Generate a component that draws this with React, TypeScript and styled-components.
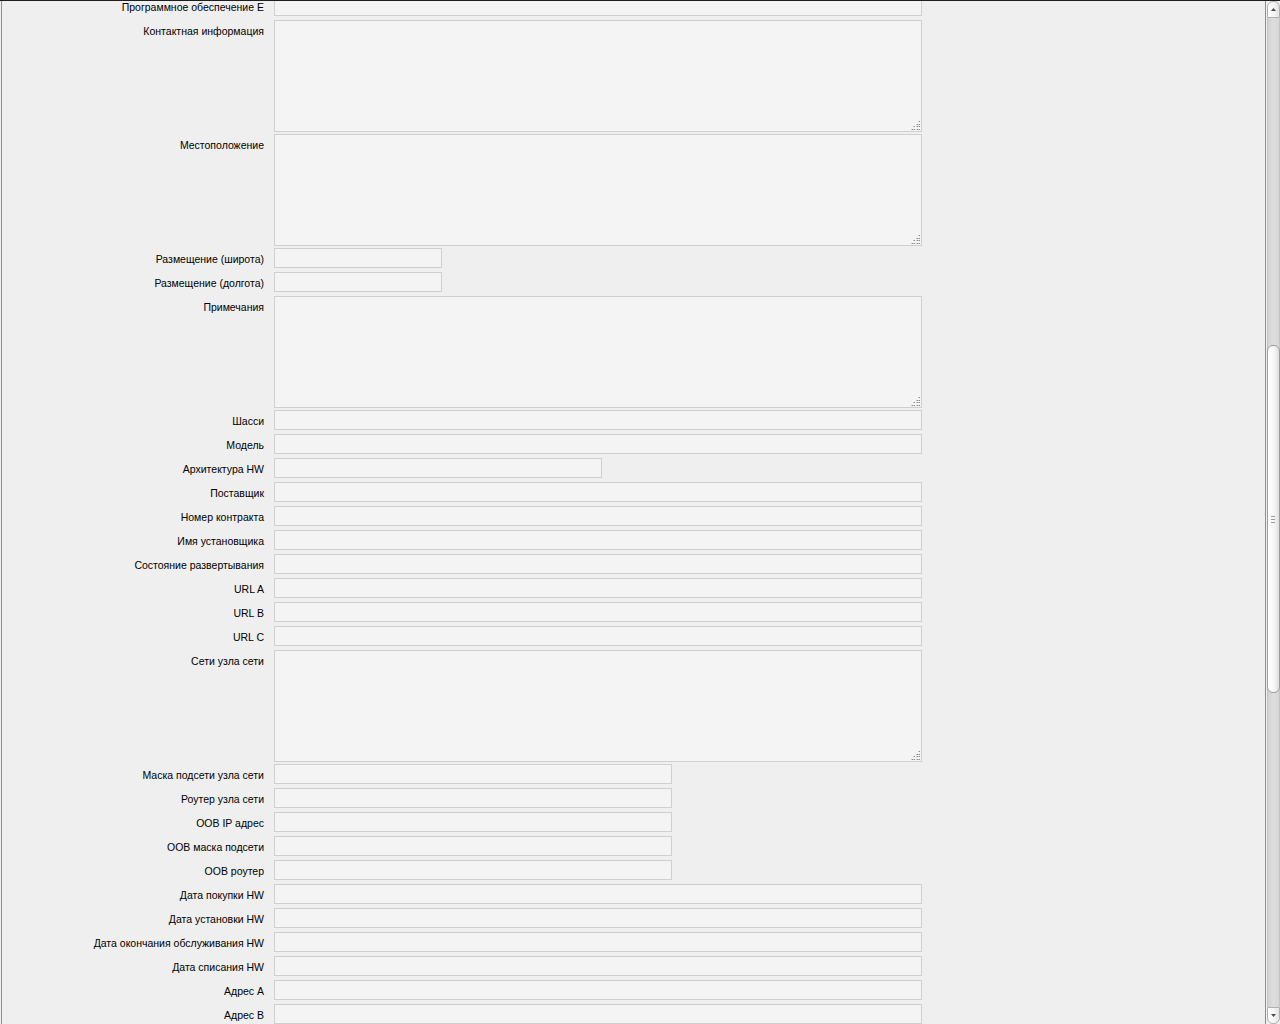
import React from "react";
import styled, { createGlobalStyle } from "styled-components";

const Global = createGlobalStyle`
  html, body {
    margin: 0;
    padding: 0;
    height: 100%;
    overflow: hidden;
    background: #efefef;
  }
  #root {
    height: 100%;
  }
`;

type Field =
  | { label: string; kind: "input"; width: number }
  | { label: string; kind: "area" };

const FULL = 648;
const SHORT = 168;
const MID = 328;
const NET = 398;

const fields: Field[] = [
  { label: "Программное обеспечение E", kind: "input", width: FULL },
  { label: "Контактная информация", kind: "area" },
  { label: "Местоположение", kind: "area" },
  { label: "Размещение (широта)", kind: "input", width: SHORT },
  { label: "Размещение (долгота)", kind: "input", width: SHORT },
  { label: "Примечания", kind: "area" },
  { label: "Шасси", kind: "input", width: FULL },
  { label: "Модель", kind: "input", width: FULL },
  { label: "Архитектура HW", kind: "input", width: MID },
  { label: "Поставщик", kind: "input", width: FULL },
  { label: "Номер контракта", kind: "input", width: FULL },
  { label: "Имя установщика", kind: "input", width: FULL },
  { label: "Состояние развертывания", kind: "input", width: FULL },
  { label: "URL A", kind: "input", width: FULL },
  { label: "URL B", kind: "input", width: FULL },
  { label: "URL C", kind: "input", width: FULL },
  { label: "Сети узла сети", kind: "area" },
  { label: "Маска подсети узла сети", kind: "input", width: NET },
  { label: "Роутер узла сети", kind: "input", width: NET },
  { label: "OOB IP адрес", kind: "input", width: NET },
  { label: "OOB маска подсети", kind: "input", width: NET },
  { label: "OOB роутер", kind: "input", width: NET },
  { label: "Дата покупки HW", kind: "input", width: FULL },
  { label: "Дата установки HW", kind: "input", width: FULL },
  { label: "Дата окончания обслуживания HW", kind: "input", width: FULL },
  { label: "Дата списания HW", kind: "input", width: FULL },
  { label: "Адрес A", kind: "input", width: FULL },
  { label: "Адрес B", kind: "input", width: FULL },
];

/* window layout: page area + vertical scrollbar */
const Window = styled.div`
  display: flex;
  height: 100%;
  border-top: 1px solid #1e1e1e;
  box-sizing: border-box;
`;

const Page = styled.main`
  flex: 1;
  margin-left: 1px;
  border-left: 1px solid #8191a7;
  border-right: 1px solid #8191a7;
  overflow: hidden;
  font-family: "Liberation Sans", Arial, sans-serif;
  font-size: 10.5px;
  color: #000;
`;

const Form = styled.form`
  display: flex;
  flex-direction: column;
  margin-top: -5px;
`;

const Row = styled.div<{ $tall?: boolean }>`
  display: grid;
  grid-template-columns: 262px 1fr;
  column-gap: 10px;
  align-items: start;
  height: ${(p) => (p.$tall ? 114 : 24)}px;
`;

const Label = styled.label`
  text-align: right;
  line-height: 13px;
  padding-top: 5px;
  white-space: nowrap;
`;

const TextInput = styled.input<{ $w: number }>`
  display: block;
  box-sizing: border-box;
  width: ${(p) => p.$w}px;
  height: 20px;
  margin: 0;
  padding: 0 3px;
  border: 1px solid #cfcfcf;
  background: #f4f4f4;
  font: inherit;
  outline: none;
`;

const AreaWrap = styled.div`
  position: relative;
  width: ${FULL}px;
  height: 112px;
`;

const TextArea = styled.textarea`
  display: block;
  box-sizing: border-box;
  width: 100%;
  height: 100%;
  margin: 0;
  padding: 2px 3px;
  border: 1px solid #cfcfcf;
  background: #f4f4f4;
  font: inherit;
  resize: none;
  outline: none;
`;

const Grip = styled.svg`
  position: absolute;
  right: 2px;
  bottom: 2px;
  width: 9px;
  height: 9px;
  pointer-events: none;
`;

const gripDots: [number, number][] = [
  [8, 0],
  [6, 3],
  [8, 3],
  [3, 5],
  [6, 5],
  [8, 5],
  [1, 8],
  [3, 8],
  [6, 8],
  [8, 8],
];

function ResizeGrip() {
  return (
    <Grip viewBox="0 0 9 9">
      {gripDots.map(([x, y], i) => (
        <g key={i}>
          <rect x={x} y={y} width={1} height={1} fill="#8c8c8c" />
          <rect x={x - 1} y={y} width={1} height={1} fill="#c4c4c4" />
        </g>
      ))}
    </Grip>
  );
}

/* scrollbar */
const ScrollColumn = styled.div`
  width: 14px;
  padding-left: 1px;
  box-sizing: border-box;
  display: flex;
  flex-direction: column;
`;

const Bar = styled.div`
  width: 13px;
  height: 100%;
  display: flex;
  flex-direction: column;
`;

const Stepper = styled.div<{ $down?: boolean }>`
  height: 17px;
  flex: none;
  box-sizing: border-box;
  border: 1px solid #b0b0b0;
  border-radius: ${(p) => (p.$down ? "0 0 6px 6px" : "6px 6px 0 0")};
  background: linear-gradient(to right, #ffffff, #f3f3f3 60%, #e2e2e2);
  display: flex;
  align-items: center;
  justify-content: center;
`;

const Track = styled.div`
  flex: 1;
  display: flex;
  flex-direction: column;
  box-sizing: border-box;
  border-left: 1px solid #c4c4c4;
  border-right: 1px solid #c4c4c4;
  background: linear-gradient(to right, #d2d2d2, #dedede 50%, #d6d6d6);
  padding-top: 327px;
`;

const Thumb = styled.div`
  height: 348px;
  margin: 0 -1px;
  box-sizing: border-box;
  border: 1px solid #9c9c9c;
  border-radius: 6px;
  background: linear-gradient(to right, #ffffff, #f6f6f6 55%, #dedede);
  display: flex;
  flex-direction: column;
  align-items: center;
  justify-content: center;
  gap: 2px;
`;

const GripLine = styled.span`
  display: block;
  width: 4px;
  height: 1px;
  margin-right: 2px;
  background: #9a9a9a;
`;

function Arrow({ down }: { down?: boolean }) {
  return (
    <svg width="5" height="3" viewBox="0 0 5 3">
      <polygon
        points={down ? "0,0 5,0 2.5,3" : "0,3 5,3 2.5,0"}
        fill="#4a4a4a"
      />
    </svg>
  );
}

function Scrollbar() {
  return (
    <ScrollColumn>
      <Bar>
        <Stepper>
          <Arrow />
        </Stepper>
        <Track>
          <Thumb>
            <GripLine />
            <GripLine />
            <GripLine />
          </Thumb>
        </Track>
        <Stepper $down>
          <Arrow down />
        </Stepper>
      </Bar>
    </ScrollColumn>
  );
}

export default function App() {
  return (
    <>
      <Global />
      <Window>
        <Page>
          <Form onSubmit={(e) => e.preventDefault()}>
            {fields.map((f, i) => {
              const id = `field-${i}`;
              return (
                <Row key={id} $tall={f.kind === "area"}>
                  <Label htmlFor={id}>{f.label}</Label>
                  {f.kind === "area" ? (
                    <AreaWrap>
                      <TextArea id={id} />
                      <ResizeGrip />
                    </AreaWrap>
                  ) : (
                    <TextInput id={id} type="text" $w={f.width} />
                  )}
                </Row>
              );
            })}
          </Form>
        </Page>
        <Scrollbar />
      </Window>
    </>
  );
}
